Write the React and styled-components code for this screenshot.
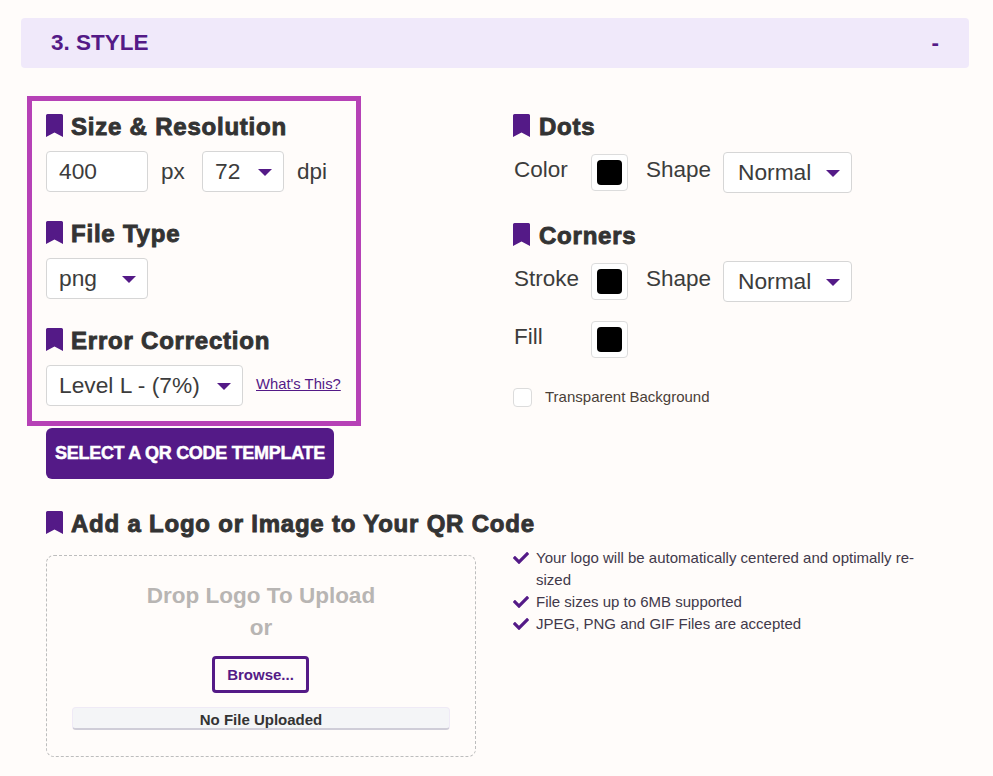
import React from 'react'
import styled, { createGlobalStyle } from 'styled-components'
import { FaCheck } from 'react-icons/fa'

const PURPLE = '#541a87'
const INK = '#333333'

const Global = createGlobalStyle`
  html, body { margin: 0; padding: 0; background: #fffcfa; }
  body { font-family: "Liberation Sans", Arial, sans-serif; color: ${INK}; }
  * { box-sizing: border-box; }
`

const Page = styled.div`
  padding: 18px 24px 19px 21px;
`

const SectionBar = styled.div`
  display: flex;
  justify-content: space-between;
  align-items: center;
  height: 50px;
  padding: 0 30px 1px;
  background: #f0e9fa;
  border-radius: 4px;
  color: ${PURPLE};
  font-size: 22.5px;
  font-weight: 700;
`

const Columns = styled.div`
  display: flex;
  margin: 28px 0 0 6px;
`

const Highlight = styled.div`
  width: 334px;
  margin-right: 152px;
  padding: 13px 14px 15px 14px;
  border: 5px solid #b641b6;
`

const RightColumn = styled.div`
  padding-top: 18px;
  width: 400px;
`

const Group = styled.div`
  margin-bottom: ${p => p.$gap ?? 29}px;
`

const Heading = styled.div`
  display: flex;
  align-items: flex-start;
  gap: ${p => p.$iconGap ?? 8}px;
  height: 26px;
  margin-bottom: ${p => p.$gap ?? 11}px;
`

const HeadingText = styled.span`
  font-size: 24px;
  line-height: 26px;
  font-weight: 700;
  letter-spacing: 0.78px;
  -webkit-text-stroke: 0.9px ${INK};
  white-space: nowrap;
`

const Row = styled.div`
  display: flex;
  align-items: center;
  margin-bottom: ${p => p.$gap ?? 0}px;
`

const Label = styled.span`
  width: ${p => p.$width}px;
  margin-bottom: ${p => p.$lift ?? 0}px;
  padding-left: ${p => p.$pad ?? 1}px;
  font-size: 22.5px;
  color: #3c3c3c;
`

const NumberInput = styled.input`
  width: 102px;
  height: 41px;
  padding: 0 12px;
  background: #fff;
  border: 1px solid #d6d6d6;
  border-radius: 4px;
  font: 22.75px "Liberation Sans", Arial, sans-serif;
  color: #3c3c3c;
`

const SelectWrap = styled.div`
  position: relative;
  width: ${p => p.$width}px;
  height: 41px;

  &::after {
    content: '';
    position: absolute;
    right: 12px;
    top: 18px;
    border-left: 7.5px solid transparent;
    border-right: 7.5px solid transparent;
    border-top: 7px solid ${PURPLE};
    pointer-events: none;
  }
`

const Select = styled.select`
  appearance: none;
  width: 100%;
  height: 100%;
  padding: 0 12px 1px ${p => p.$pad ?? 12}px;
  background: #fff;
  border: 1px solid #d6d6d6;
  border-radius: 4px;
  font: 22.75px "Liberation Sans", Arial, sans-serif;
  color: #3c3c3c;
`

const HelpLink = styled.a`
  margin: 0 0 3px 13px;
  font-size: 14.8px;
  color: ${PURPLE};
  text-decoration: underline;
`

const Swatch = styled.div`
  display: flex;
  align-items: center;
  justify-content: center;
  width: 37px;
  height: 37px;
  margin-right: ${p => p.$gap ?? 0}px;
  background: #fff;
  border: 1px solid #dcdcdc;
  border-radius: 4px;

  &::before {
    content: '';
    width: 25px;
    height: 25px;
    border-radius: 4px;
    background: #000;
  }
`

const CheckRow = styled.label`
  display: flex;
  align-items: center;
  gap: 13px;
  font-size: 15px;
  line-height: 17px;
  color: #4a4038;

  span {
    margin-bottom: 2px;
  }
`

const CheckBox = styled.input`
  appearance: none;
  width: 19px;
  height: 19px;
  margin: 0;
  background: #fff;
  border: 1px solid #dcdcdc;
  border-radius: 4px;
`

const TemplateButton = styled.button`
  display: block;
  width: 288px;
  height: 51px;
  margin: 2px 0 0 25px;
  padding: 0;
  background: ${PURPLE};
  border: 0;
  border-radius: 6px;
  color: #fff;
  font: 700 18px "Liberation Sans", Arial, sans-serif;
  letter-spacing: -0.3px;
  -webkit-text-stroke: 0.5px #fff;
`

const LogoSection = styled.div`
  margin: 32px 0 0 25px;
`

const LogoRow = styled.div`
  display: flex;
  align-items: flex-start;
  margin-top: -8px;
`

const DropZone = styled.div`
  display: flex;
  flex-direction: column;
  align-items: center;
  width: 430px;
  height: 202px;
  margin-top: 8px;
  padding: 24px 26px 0;
  border: 1px dashed #bdbdbd;
  border-radius: 8px;
`

const DropText = styled.div`
  font-size: 22.5px;
  line-height: 32px;
  font-weight: 700;
  color: #b8b5b3;
`

const BrowseButton = styled.button`
  width: 97px;
  height: 37px;
  margin: 12px 1px 0 0;
  padding: 0;
  background: transparent;
  border: 3px solid ${PURPLE};
  border-radius: 4px;
  color: ${PURPLE};
  font: 700 15px "Liberation Sans", Arial, sans-serif;
`

const FileStatus = styled.div`
  width: 378px;
  height: 23px;
  margin-top: 14px;
  background: #f4f5f7;
  border: 1px solid #efeaf6;
  border-bottom: 2px solid #cfcdd8;
  border-radius: 4px;
  font-size: 15px;
  line-height: 23px;
  font-weight: 700;
  text-align: center;
`

const Notes = styled.ul`
  width: 402px;
  margin: 0 0 0 37px;
  padding: 0;
  list-style: none;
`

const Note = styled.li`
  display: flex;
  gap: 7px;
  font-size: 15px;
  line-height: 22px;
  color: #41394a;

  svg {
    flex: none;
    margin-top: 3px;
    color: ${PURPLE};
  }
`

const Bookmark = () => (
  <svg width="17" height="23" viewBox="0 0 17 23">
    <path d="M1.5 0h14A1.5 1.5 0 0 1 17 1.5V23l-8.5-4.5L0 23V1.5A1.5 1.5 0 0 1 1.5 0z" fill={PURPLE} />
  </svg>
)

const Title = ({ children, gap, iconGap }) => (
  <Heading $gap={gap} $iconGap={iconGap}>
    <Bookmark />
    <HeadingText>{children}</HeadingText>
  </Heading>
)

const Dropdown = ({ width, value, pad }) => (
  <SelectWrap $width={width}>
    <Select defaultValue={value} $pad={pad}>
      <option>{value}</option>
    </Select>
  </SelectWrap>
)

const App = () => {
  return (
    <Page>
      <Global />
      <SectionBar>
        <span>3. STYLE</span>
        <span>-</span>
      </SectionBar>

      <Columns>
        <Highlight>
          <Group>
            <Title>Size &amp; Resolution</Title>
            <Row>
              <NumberInput defaultValue="400" />
              <Label $width={54} $pad={13}>px</Label>
              <Dropdown width={82} value="72" />
              <Label $width={50} $pad={13}>dpi</Label>
            </Row>
          </Group>
          <Group>
            <Title>File Type</Title>
            <Dropdown width={102} value="png" />
          </Group>
          <Group $gap={0}>
            <Title>Error Correction</Title>
            <Row>
              <Dropdown width={197} value="Level L - (7%)" />
              <HelpLink href="#">What's This?</HelpLink>
            </Row>
          </Group>
        </Highlight>

        <RightColumn>
          <Group $gap={30}>
            <Title gap={12} iconGap={9}>Dots</Title>
            <Row>
              <Label $width={78} $lift={6}>Color</Label>
              <Swatch $gap={18} />
              <Label $width={77} $lift={6} $pad={0}>Shape</Label>
              <Dropdown width={129} value="Normal" pad={14} />
            </Row>
          </Group>
          <Group $gap={19}>
            <Title gap={12} iconGap={9}>Corners</Title>
            <Row>
              <Label $width={78} $lift={6}>Stroke</Label>
              <Swatch $gap={18} />
              <Label $width={77} $lift={6} $pad={0}>Shape</Label>
              <Dropdown width={129} value="Normal" pad={14} />
            </Row>
          </Group>
          <Row $gap={30}>
            <Label $width={78} $lift={6}>Fill</Label>
            <Swatch />
          </Row>
          <CheckRow>
            <CheckBox type="checkbox" />
            <span>Transparent Background</span>
          </CheckRow>
        </RightColumn>
      </Columns>

      <TemplateButton>SELECT A QR CODE TEMPLATE</TemplateButton>

      <LogoSection>
        <Title gap={18}>Add a Logo or Image to Your QR Code</Title>
        <LogoRow>
          <DropZone>
            <DropText>Drop Logo To Upload</DropText>
            <DropText>or</DropText>
            <BrowseButton>Browse...</BrowseButton>
            <FileStatus>No File Uploaded</FileStatus>
          </DropZone>
          <Notes>
            <Note><FaCheck size={16} /><span>Your logo will be automatically centered and optimally re-sized</span></Note>
            <Note><FaCheck size={16} /><span>File sizes up to 6MB supported</span></Note>
            <Note><FaCheck size={16} /><span>JPEG, PNG and GIF Files are accepted</span></Note>
          </Notes>
        </LogoRow>
      </LogoSection>
    </Page>
  )
}

export default App
